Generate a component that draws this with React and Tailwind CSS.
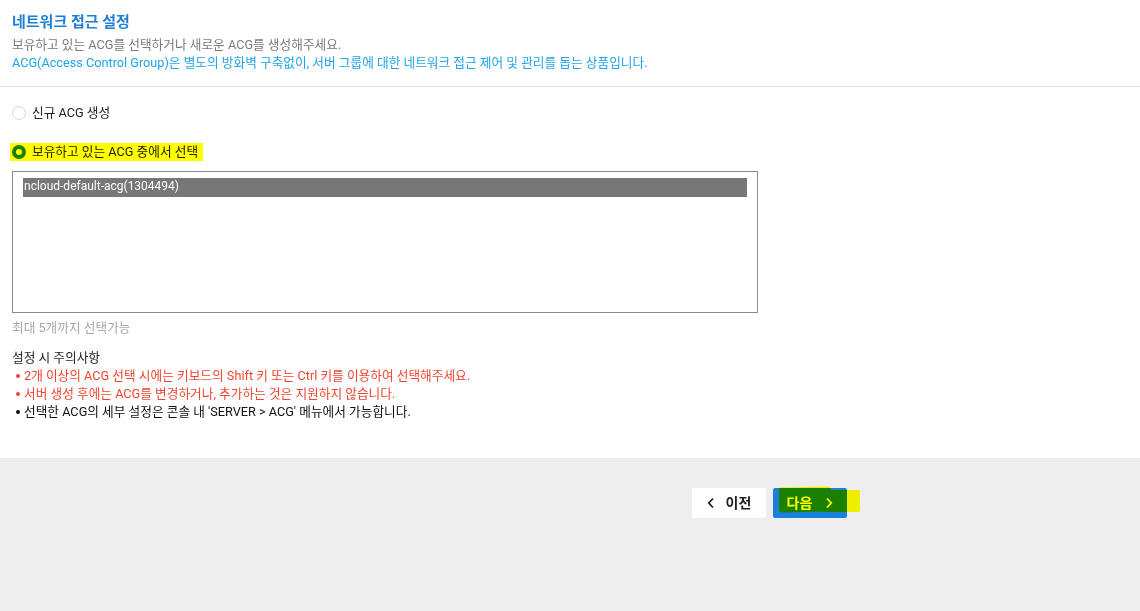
import React from "react";

export default function App() {
  const font = { fontFamily: 'Roboto, "Noto Sans CJK KR", sans-serif' };
  return (
    <div className="w-[1140px] h-[611px] bg-white flex flex-col overflow-hidden" style={font}>
      <div className="flex flex-col">
        <div className="px-3 pt-[12px] pb-[14px] border-b border-[#e2e2e2]">
          <h1 className="text-[15px] font-bold text-[#1f7fd5] leading-[20px]">네트워크 접근 설정</h1>
          <p className="mt-[4px] text-[12.7px] leading-[18px] text-[#7a7a7a]">보유하고 있는 ACG를 선택하거나 새로운 ACG를 생성해주세요.</p>
          <p className="text-[12.7px] leading-[18px] text-[#1ea5e9]">ACG(Access Control Group)은 별도의 방화벽 구축없이, 서버 그룹에 대한 네트워크 접근 제어 및 관리를 돕는 상품입니다.</p>
        </div>
        <div className="px-3 pt-[17px] pb-[37px]">
          <label className="flex items-center gap-[6px] h-[18px] text-[12.7px] text-[#222]">
            <span className="w-[14px] h-[14px] rounded-full border border-[#d6d6d6] bg-white"></span>
            <span>신규 ACG 생성</span>
          </label>
          <div className="mt-[21px] relative inline-flex">
            <label className="flex items-center gap-[6px] h-[18px] text-[12.7px] text-[#222]">
              <span className="w-[14px] h-[14px] rounded-full border-[4px] border-[#1f7fd5] bg-white"></span>
              <span>보유하고 있는 ACG 중에서 선택</span>
            </label>
            <div className="absolute left-[-2px] top-[0px] w-[193px] h-[18px] bg-[#ffff00] mix-blend-multiply"></div>
          </div>
          <div className="mt-[5px] w-[746px] h-[142px] border border-[#8a8a8a] pl-[10px] pr-[10px] pt-[6px]">
            <div className="h-[19px] bg-[#777777] text-white text-[12px] leading-[17px] px-[1px]">ncloud-default-acg(1304494)</div>
          </div>
          <p className="mt-[6px] text-[12.7px] leading-[18px] text-[#a8a8a8]">최대 5개까지 선택가능</p>
          <p className="mt-[12px] text-[12.7px] leading-[18px] text-[#222]">설정 시 주의사항</p>
          <ul className="text-[12.7px] leading-[18px]">
            <li className="flex items-center text-[#f2452f]"><span className="w-[4px] h-[4px] rounded-full bg-[#f2452f] ml-[4px] mr-[4px]"></span>2개 이상의 ACG 선택 시에는 키보드의 Shift 키 또는 Ctrl 키를 이용하여 선택해주세요.</li>
            <li className="flex items-center text-[#f2452f]"><span className="w-[4px] h-[4px] rounded-full bg-[#f2452f] ml-[4px] mr-[4px]"></span>서버 생성 후에는 ACG를 변경하거나, 추가하는 것은 지원하지 않습니다.</li>
            <li className="flex items-center text-[#111]"><span className="w-[4px] h-[4px] rounded-full bg-[#111] ml-[4px] mr-[4px]"></span>선택한 ACG의 세부 설정은 콘솔 내 'SERVER &gt; ACG' 메뉴에서 가능합니다.</li>
          </ul>
        </div>
      </div>
      <div className="flex-1 bg-[#eeeeee] pt-[30px]">
        <div className="flex gap-[7px] ml-[692px] relative w-fit">
          <button className="w-[74px] h-[30px] bg-white rounded-[2px] flex items-center justify-center gap-[11px] text-[14px] font-bold text-[#222]">
            <svg width="8" height="12" viewBox="0 0 8 12" fill="none" stroke="#222" strokeWidth="1.8"><path d="M6 1.5L1.8 6L6 10.5" /></svg>
            <span>이전</span>
          </button>
          <button className="w-[74px] h-[30px] bg-[#1b80d9] rounded-[2px] flex items-center justify-center gap-[13px] text-[14px] font-bold text-white">
            <span>다음</span>
            <svg width="8" height="12" viewBox="0 0 8 12" fill="none" stroke="#fff" strokeWidth="1.8"><path d="M2 1.5L6.2 6L2 10.5" /></svg>
          </button>
          <div className="absolute left-[87px] top-[-1px] w-[52px] h-[25px] bg-[#ffff00] mix-blend-multiply rounded-[3px] -rotate-1"></div>
          <div className="absolute left-[130px] top-[2px] w-[38px] h-[22px] bg-[#ffff00] mix-blend-multiply rounded-[2px]"></div>
        </div>
      </div>
    </div>
  );
}
